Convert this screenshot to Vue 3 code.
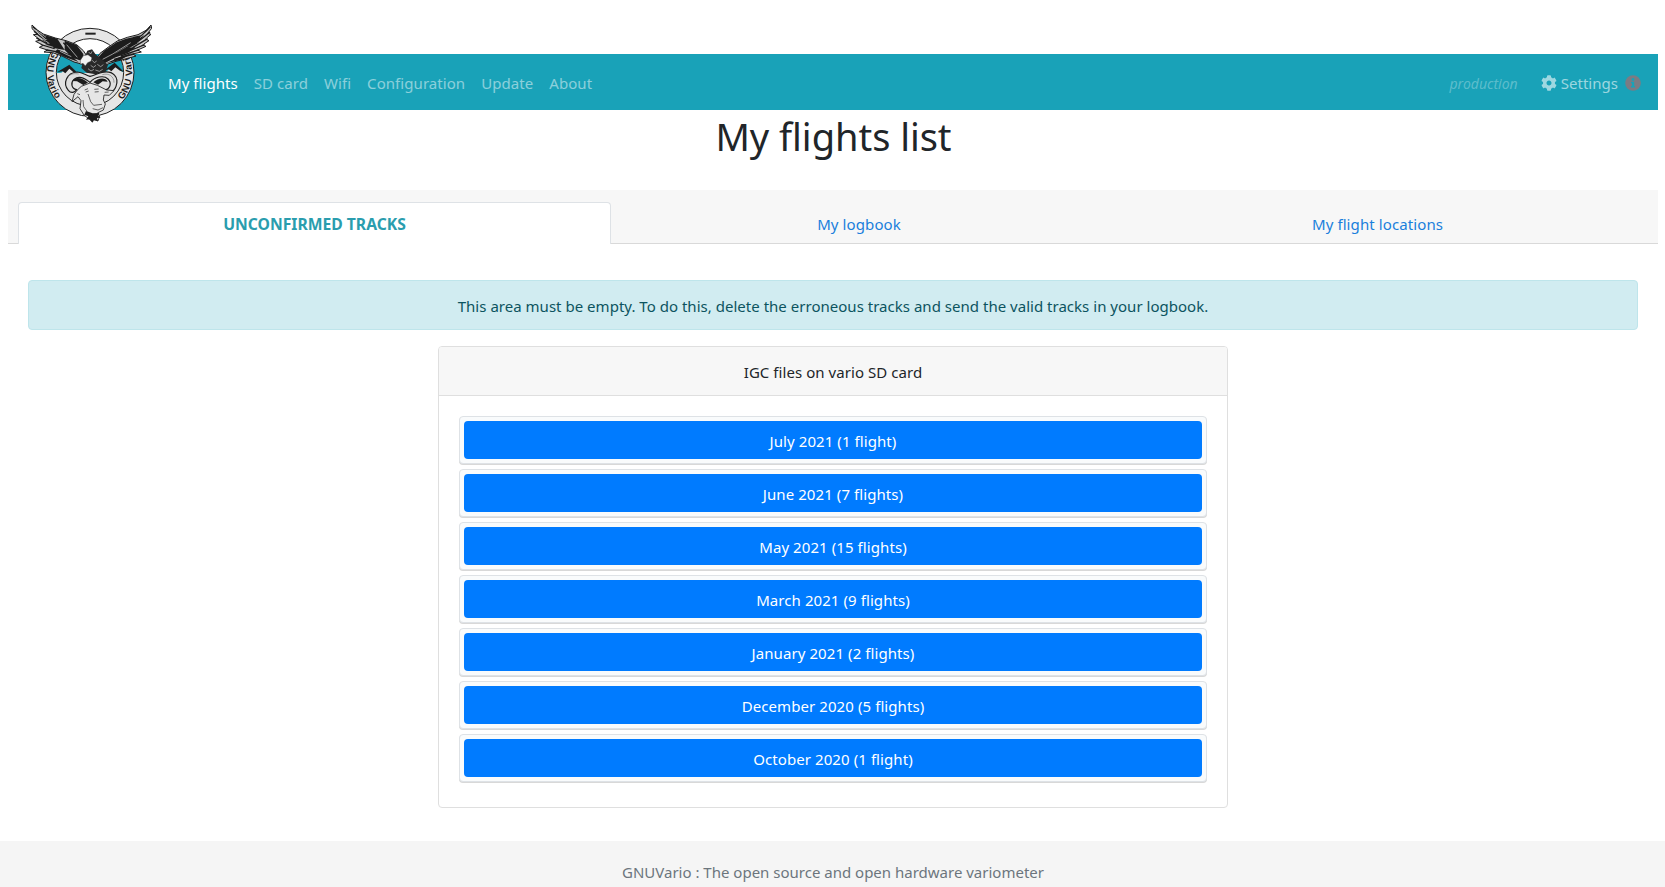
<script setup>
const nav = ['My flights', 'SD card', 'Wifi', 'Configuration', 'Update', 'About']
const months = [
  'July 2021 (1 flight)',
  'June 2021 (7 flights)',
  'May 2021 (15 flights)',
  'March 2021 (9 flights)',
  'January 2021 (2 flights)',
  'December 2020 (5 flights)',
  'October 2020 (1 flight)',
]
</script>

<template>
  <div class="page">
    <div class="wrap">
      <nav class="navbar">
        <a class="brand">
          <svg viewBox="90 39 366 303" width="122" height="101">
            <defs>
              <path id="ringLeft" d="M160 121 A126 126 0 0 0 194 290" />
              <path id="ringRight" d="M367 270 A126 126 0 0 0 376 120" />
            </defs>
            <!-- landscape inside the ring -->
            <path d="M166 190L184 188L208 166L232 190L318 186L344 162L364 184L374 190A103 103 0 0 1 166 190Z" fill="#e2e2e2" />
            <path d="M172 186L208 164L236 192L222 188L208 176L196 190L188 184ZM312 182L344 158L372 186L360 182L346 172L334 184L326 178Z" fill="#1c1c1c" />
            <!-- ring -->
            <circle cx="270" cy="187" r="116" fill="none" stroke="#e6e6e6" stroke-width="32" />
            <circle cx="270" cy="187" r="132" fill="none" stroke="#222" stroke-width="3" />
            <circle cx="270" cy="187" r="101" fill="none" stroke="#222" stroke-width="3" />
            <path d="M256 71h31" stroke="#222" stroke-width="6" />
            <text class="ring-text"><textPath href="#ringLeft" textLength="156">GNU Vario</textPath></text>
            <text class="ring-text"><textPath href="#ringRight" textLength="156">GNU Vario</textPath></text>
            <!-- wings -->
            <path d="M96 45L112 60L130 72L166 84L198 92L230 104L250 122L266 146L252 164L222 156L186 138L158 128L132 126L142 120L118 112L130 106L107 94L121 90L100 74L114 73L96 56Z" fill="#c4c4c4" stroke="#1c1c1c" stroke-width="3" />
            <path d="M124 72L172 86L194 120L160 114L134 104L150 100L126 91L142 89ZM194 92L230 105L250 132L250 154L218 144L194 120ZM172 118L206 132L236 156L196 142L164 126Z" fill="#1c1c1c" />
            <path d="M99 50L140 88M102 64L142 98M109 84L150 106M122 103L164 116M140 120L186 128M190 98L238 148M210 102L250 146" fill="none" stroke="#1c1c1c" stroke-width="4" />
            <path d="M106 59L138 82M112 78L145 98M126 101L160 112M200 104L232 142M180 124L214 140" fill="none" stroke="#ddd" stroke-width="2" />
            <path d="M453 45L440 60L414 74L382 82L352 93L324 112L300 130L286 152L312 166L348 154L372 148L408 138L398 132L424 126L413 120L438 109L427 105L447 92L436 87L453 73L443 70L455 55Z" fill="#c4c4c4" stroke="#1c1c1c" stroke-width="3" />
            <path d="M350 97L378 86L404 80L392 102L346 130L306 152L290 148L312 122ZM400 80L432 74L416 98L388 114L412 108L384 128L344 143L310 162L304 150L350 128L384 108ZM318 160L360 141L398 128L362 150Z" fill="#1c1c1c" />
            <path d="M451 50L414 88M450 66L410 98M443 86L398 113M434 104L382 125M418 119L362 138M402 132L342 148" fill="none" stroke="#1c1c1c" stroke-width="4" />
            <path d="M444 64L420 83M440 82L412 99M432 100L404 113M392 98L338 132L308 148" fill="none" stroke="#ddd" stroke-width="2" />
            <!-- eagle body and head -->
            <path d="M262 122L276 118L286 132L304 148L324 164L318 184L296 194L260 188L244 174L250 150Z" fill="#292929" />
            <path d="M241 151L250 137L264 134L276 143L273 154L263 158L256 168L249 160L241 163Z" fill="#f2f2f2" stroke="#333" stroke-width="1.500" />
            <path d="M266 126L272 132L276 124M277 151L283 158L290 153M272 166L280 172L288 166M292 163L302 170L310 164M264 176L273 183L282 178M286 180L298 184L308 178" fill="none" stroke="#ccc" stroke-width="2" />
            <!-- horns -->
            <path d="M232 186C198 188 188 222 205 241C214 252 224 247 230 239C214 236 211 218 222 208C236 196 254 204 270 217C284 201 311 194 324 207C336 219 331 238 313 240C324 252 342 246 348 229C358 202 340 180 306 187C290 191 282 197 270 199C258 196 248 187 232 186Z" fill="#dedede" stroke="#1c1c1c" stroke-width="3.500" />
            <path d="M217 213C224 198 248 202 264 218L250 225L231 214ZM280 217C294 204 316 201 323 215L308 214L294 224Z" fill="#1c1c1c" />
            <path d="M202 202C212 190 224 190 236 192M307 194C328 188 342 200 342 218" fill="none" stroke="#777" stroke-width="2" />
            <!-- gnu head -->
            <path d="M244 229L270 219L292 226L320 240L342 242L328 256L312 255L310 270L316 282L310 300L292 309L299 318L294 333L284 329L278 335L268 328L252 315L240 296L243 272L234 260L216 275L222 253L232 240Z" fill="#e6e6e6" stroke="#1c1c1c" stroke-width="2.500" />
            <path d="M258 303L278 310L298 309L295 317L302 323L291 324L294 334L281 330L277 338L269 328L258 329L265 319L253 314Z" fill="#1c1c1c" />
            <path d="M254 240L264 236M257 246L266 243M283 238L296 237M284 246L296 245M264 252L272 275L281 286L306 283M278 296L294 300L309 293M249 270L251 290L261 304M232 251L240 254M314 247L326 246" fill="none" stroke="#1c1c1c" stroke-width="2" />
          </svg>
        </a>
        <div class="links">
          <a v-for="(n, i) in nav" :key="n" class="link" :class="{ active: i === 0 }">{{ n }}</a>
        </div>
        <span class="env">production</span>
        <a class="settings">
          <svg class="gear" viewBox="0 0 512 512" width="16" height="16">
            <path fill="currentColor" d="M487.400 315.700l-42.600-24.600c4.300-23.200 4.300-47 0-70.200l42.600-24.600c4.900-2.800 7.100-8.600 5.500-14-11.100-35.600-30-67.800-54.700-94.600-3.800-4.100-10-5.100-14.800-2.300L380.800 110c-17.900-15.400-38.500-27.300-60.800-35.100V25.800c0-5.600-3.900-10.500-9.400-11.700-36.700-8.200-74.300-7.800-109.200 0-5.500 1.200-9.400 6.100-9.400 11.700V75c-22.200 7.900-42.800 19.800-60.800 35.100L88.700 85.500c-4.900-2.800-11-1.900-14.800 2.300-24.700 26.700-43.600 58.900-54.700 94.600-1.700 5.400.6 11.200 5.500 14L67.300 221c-4.300 23.200-4.300 47 0 70.200l-42.600 24.600c-4.900 2.800-7.100 8.600-5.500 14 11.100 35.600 30 67.800 54.700 94.600 3.800 4.100 10 5.100 14.800 2.300l42.600-24.600c17.900 15.400 38.500 27.300 60.800 35.100v49.200c0 5.600 3.900 10.500 9.400 11.700 36.700 8.200 74.300 7.800 109.200 0 5.500-1.200 9.400-6.100 9.400-11.700v-49.200c22.200-7.900 42.800-19.800 60.800-35.100l42.600 24.600c4.900 2.800 11 1.900 14.800-2.300 24.700-26.700 43.600-58.900 54.700-94.600 1.500-5.500-.7-11.300-5.600-14.100zM256 336c-44.100 0-80-35.900-80-80s35.900-80 80-80 80 35.900 80 80-35.900 80-80 80z" />
          </svg>
          <span>Settings</span>
          <svg class="info" viewBox="0 0 16 16" width="16" height="16">
            <circle cx="8" cy="8" r="7.800" fill="#7a7c84" />
            <circle cx="8" cy="4.500" r="1.400" fill="#19a2b8" />
            <path d="M6 6.800h3.200v4.200h.9v1.500H6V11h.9V8.300H6z" fill="#19a2b8" />
          </svg>
        </a>
      </nav>
      <h1>My flights list</h1>
      <div class="tabs">
        <a class="tab on">UNCONFIRMED TRACKS</a>
        <a class="tab mid">My logbook</a>
        <a class="tab last">My flight locations</a>
      </div>
      <div class="alert">This area must be empty. To do this, delete the erroneous tracks and send the valid tracks in your logbook.</div>
      <section class="card">
        <header>IGC files on vario SD card</header>
        <div class="body">
          <div v-for="m in months" :key="m" class="item"><button>{{ m }}</button></div>
        </div>
      </section>
    </div>
    <footer>GNUVario : The open source and open hardware variometer</footer>
  </div>
</template>

<style>
html, body { margin: 0; overflow: hidden; background: #fff; }
</style>
<style scoped>
* { box-sizing: border-box; }
.page { height: 887px; display: flex; flex-direction: column; overflow: hidden; font: 15px/24px "Noto Sans", "Open Sans", sans-serif; letter-spacing: .02px; color: #212529; }
.wrap { height: 841px; flex: none; padding: 54px 7px 0 8px; }
.navbar { height: 56px; background: #19a2b8; display: flex; align-items: center; padding: 2px 17px 0 16px; position: relative; }
.brand { position: absolute; left: 22px; top: -31px; line-height: 0; }
.ring-text { font: bold 29px "Liberation Sans", sans-serif; fill: #1c1c1c; letter-spacing: 0; }
.links { display: flex; margin-left: 136px; flex: 1; letter-spacing: .06px; }
.link { padding: 0 8px; color: rgba(255,255,255,.5); white-space: nowrap; }
.link.active { color: #fff; }
.env { color: rgba(255,255,255,.3); font-style: italic; font-size: 14px; margin-right: 23px; padding-top: 2px; }
.settings { display: flex; align-items: center; color: rgba(255,255,255,.58); }
.gear { margin-right: 4px; }
.info { margin-left: 7px; }
h1 { margin: 2px 0 30px; padding-left: 1px; font-size: 38px; font-weight: 400; line-height: 48px; text-align: center; letter-spacing: -.03px; }
.tabs { height: 54px; background: #f7f7f7; border-bottom: 1px solid #d9d9d9; padding: 12px 10px 0; display: flex; }
.tab { height: 42px; line-height: 44px; text-align: center; color: #1a7fdc; flex: 1 1 0; letter-spacing: .1px; }
.tab.on { flex: none; width: 593px; line-height: 42px; background: #fff; border: 1px solid #dee2e6; border-bottom: 0; border-radius: 4px 4px 0 0; font-weight: 700; font-size: 15.700px; letter-spacing: 0; color: #2a9dae; }
.tab.mid { flex: none; width: 496px; }
.alert { margin: 36px 20px 16px; height: 50px; line-height: 50px; background: #d1ecf1; border: 1px solid #bee5eb; border-radius: 4px; color: #0c5460; text-align: center; }
.card { width: 790px; height: 462px; margin: 0 auto; border: 1px solid #dfdfdf; border-radius: 4px; letter-spacing: .06px; }
header { height: 49px; line-height: 50px; background: #f7f7f7; border-bottom: 1px solid #dfdfdf; border-radius: 3px 3px 0 0; text-align: center; }
.body { padding: 20px; }
.item { height: 48px; margin-bottom: 5px; padding: 4px; border: 1px solid #dee2e6; border-radius: 4px; background: #f9fbfc; box-shadow: 0 1px 0 #d8d8d8; }
button { display: block; width: 100%; height: 38px; border: 0; border-radius: 4px; padding: 2px 0 0; background: #007bff; color: #fff; font: inherit; letter-spacing: .08px; }
footer { height: 62px; line-height: 62px; flex: none; padding-left: 1px; background: #f5f5f5; color: #6c757d; text-align: center; letter-spacing: 0; }
</style>
